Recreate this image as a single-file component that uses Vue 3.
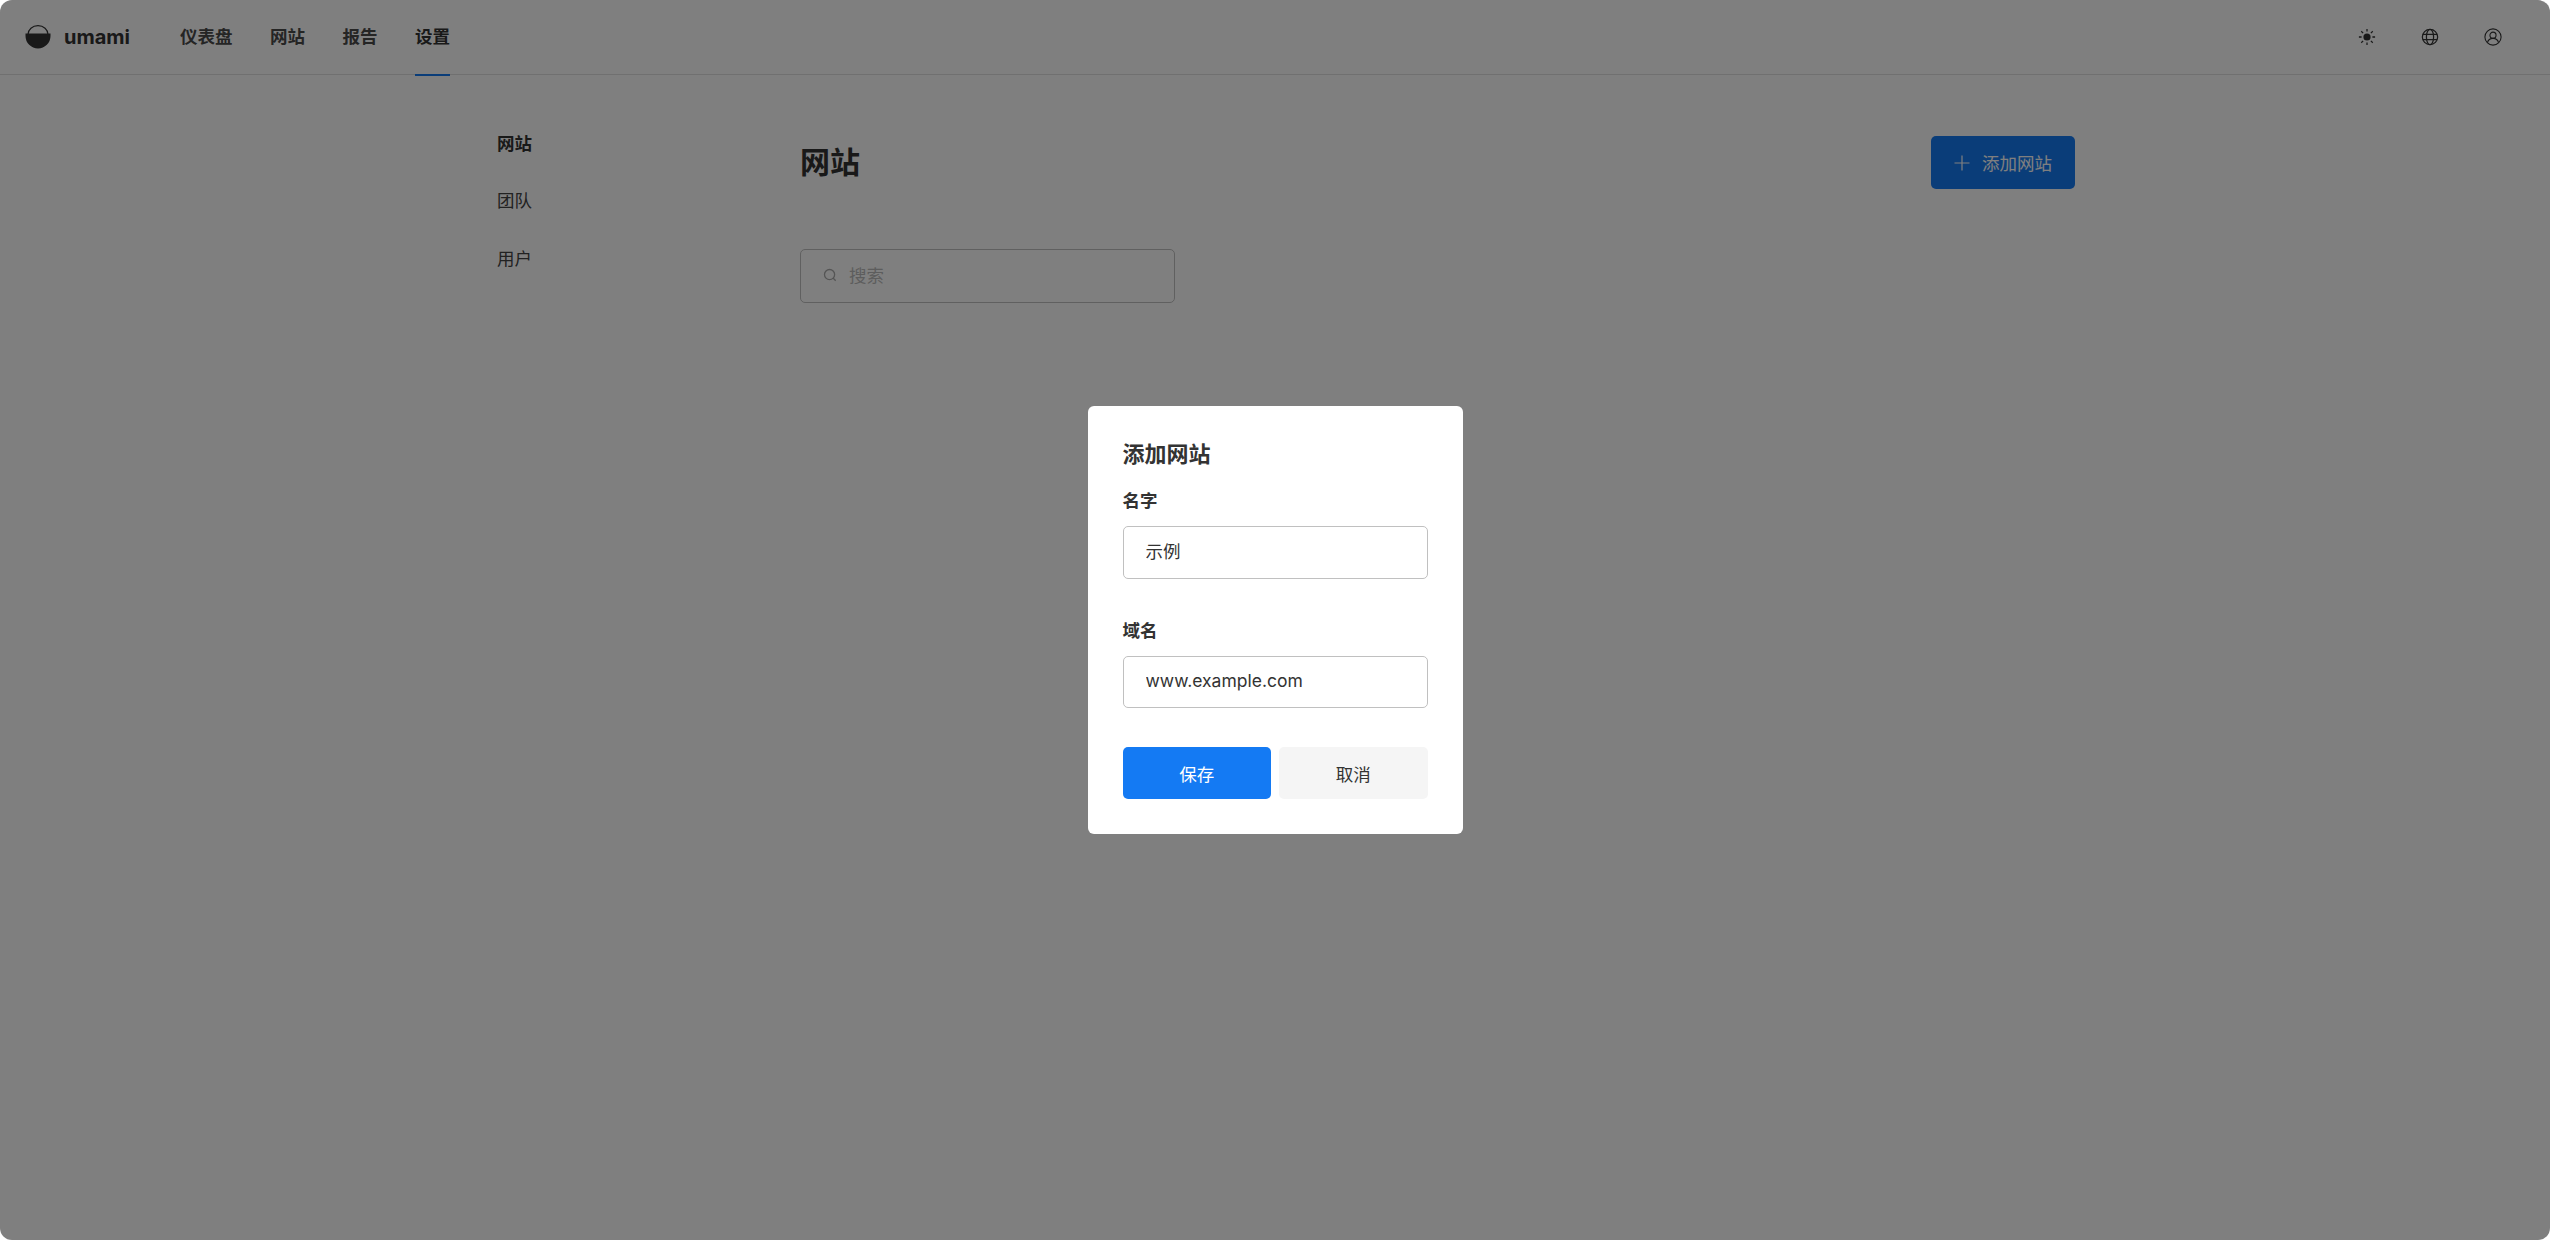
<template>
  <div class="page">
    <header class="header">
      <div class="brand">
        <svg class="logo" viewBox="0 0 26 24" width="26" height="24">
          <path d="M3 9.5a10 8.8 0 0 1 20 0" fill="none" stroke="#333" stroke-width="1.200" />
          <path d="M.5 8.500h25v2.500a12.500 12.500 0 0 1-25 0z" fill="#333" />
        </svg>
        <span class="brand-name">umami</span>
      </div>
      <nav class="nav">
        <a v-for="item in navItems" :key="item" class="nav-item" :class="{ active: item === '设置' }">{{ item }}</a>
      </nav>
      <div class="actions">
        <button class="icon-btn">
          <svg viewBox="0 0 20 20" width="18" height="18">
            <circle cx="10" cy="10" r="4" fill="#333" />
            <path d="M10 1v3M10 16v3M1 10h3M16 10h3M3.600 3.600l2.100 2.100M14.300 14.300l2.100 2.100M3.600 16.400l2.100-2.100M14.300 5.700l2.100-2.100" stroke="#333" stroke-width="1.400" fill="none" />
          </svg>
        </button>
        <button class="icon-btn">
          <svg viewBox="0 0 20 20" width="18" height="18" fill="none" stroke="#333" stroke-width="1.400">
            <circle cx="10" cy="10" r="8.500" />
            <ellipse cx="10" cy="10" rx="4" ry="8.500" />
            <path d="M2.200 7h15.600M2.200 13h15.600" />
          </svg>
        </button>
        <button class="icon-btn">
          <svg viewBox="0 0 20 20" width="18" height="18" fill="none" stroke="#333" stroke-width="1.200">
            <circle cx="10" cy="10" r="9" />
            <circle cx="10" cy="8" r="3.400" />
            <path d="M3.800 16.200c.8-3 3.300-4.700 6.200-4.700s5.400 1.700 6.200 4.700" />
          </svg>
        </button>
      </div>
    </header>

    <main class="layout">
      <aside class="sidebar">
        <a v-for="item in sideItems" :key="item" class="side-item" :class="{ active: item === '网站' }">{{ item }}</a>
      </aside>
      <section class="content">
        <div class="page-head">
          <h1>网站</h1>
          <button class="add-btn">
            <svg viewBox="0 0 16 16" width="16" height="16">
              <path d="M8 .5v15M.5 8h15" stroke="#fff" stroke-width="1.200" fill="none" />
            </svg>
            <span>添加网站</span>
          </button>
        </div>
        <label class="search">
          <svg viewBox="0 0 16 16" width="14" height="14" fill="none" stroke="#aaa" stroke-width="1.500">
            <circle cx="7.500" cy="7.500" r="5.800" />
            <path d="M11.500 11.500l3 3" />
          </svg>
          <input type="text" placeholder="搜索" />
        </label>
      </section>
    </main>

    <div class="overlay">
      <form class="modal" @submit.prevent>
        <h2>添加网站</h2>
        <label class="field-label">名字</label>
        <input v-model="name" class="field-input cjk" type="text" />
        <label class="field-label second">域名</label>
        <input v-model="domain" class="field-input" type="text" />
        <div class="modal-btns">
          <button class="btn primary" type="submit">保存</button>
          <button class="btn" type="button">取消</button>
        </div>
      </form>
    </div>
  </div>
</template>

<script setup>
import { ref } from 'vue';

const navItems = ['仪表盘', '网站', '报告', '设置'];
const sideItems = ['网站', '团队', '用户'];

const name = ref('示例');
const domain = ref('www.example.com');
</script>

<style>
html,
body {
  margin: 0;
  background: #fff;
}
</style>

<style scoped>
.page {
  position: relative;
  height: 1240px;
  overflow: hidden;
  border-radius: 12px;
  background: #fff;
  color: #333;
  font-family: Inter, 'Noto Sans CJK SC', sans-serif;
  font-size: 17.5px;
}

.header {
  display: flex;
  align-items: center;
  height: 74px;
  padding: 0 0 0 25px;
  border-bottom: 1px solid #e1e1e1;
}

.brand {
  display: flex;
  align-items: center;
  gap: 13px;
  width: 155px;
}

.logo {
  display: block;
}

.brand-name {
  font-size: 20px;
  font-weight: 700;
  color: #333;
}

.nav {
  display: flex;
  gap: 37.500px;
  align-self: stretch;
}

.nav-item {
  display: flex;
  align-items: center;
  box-sizing: border-box;
  height: 76px;
  padding-bottom: 3px;
  font-weight: 600;
  border-bottom: 2px solid transparent;
  color: #4a4a4a;
}

.nav-item.active {
  color: #333;
  border-bottom-color: #147af3;
}

.actions {
  display: flex;
  gap: 45px;
  margin-left: auto;
  padding-right: 48px;
}

.icon-btn {
  display: flex;
  padding: 0;
  border: 0;
  background: none;
}

.layout {
  display: grid;
  grid-template-columns: 323px 1fr;
  box-sizing: border-box;
  width: 1600px;
  margin: 0 auto;
  padding-left: 2px;
}

.sidebar {
  display: flex;
  flex-direction: column;
  gap: 31.500px;
  padding: 55.500px 0 0 20px;
}

.side-item {
  line-height: 26px;
  color: #444;
}

.side-item.active {
  font-weight: 700;
  color: #333;
}

.page-head {
  display: flex;
  align-items: center;
  justify-content: space-between;
  margin-top: 61px;
}

h1 {
  margin: 0;
  padding-bottom: 6px;
  font-size: 30px;
  font-weight: 700;
  color: #333;
}

.add-btn {
  display: flex;
  align-items: center;
  justify-content: center;
  gap: 12px;
  width: 144px;
  height: 53px;
  padding: 0;
  border: 0;
  border-radius: 5px;
  background: #147af3;
  color: #fff;
  font: inherit;
}

.search {
  display: flex;
  align-items: center;
  gap: 12px;
  box-sizing: border-box;
  width: 375px;
  height: 54px;
  margin-top: 60px;
  padding: 0 22px 2px;
  border: 1px solid #c0c0c0;
  border-radius: 5px;
}

.search input {
  flex: 1;
  min-width: 0;
  padding: 0;
  border: 0;
  outline: none;
  font: inherit;
  color: #333;
}

.search input::placeholder {
  color: #bbb;
}

.overlay {
  position: absolute;
  inset: 0;
  display: flex;
  align-items: center;
  justify-content: center;
  background: rgba(0, 0, 0, 0.5);
}

.modal {
  display: flex;
  flex-direction: column;
  box-sizing: border-box;
  width: 375px;
  padding: 35px;
  border-radius: 6px;
  background: #fff;
}

h2 {
  margin: 0 0 21px;
  font-size: 22px;
  line-height: 26px;
  font-weight: 700;
  color: #333;
}

.field-label {
  margin-bottom: 12px;
  line-height: 26px;
  font-weight: 700;
}

.field-label.second {
  margin-top: 39px;
}

.field-input {
  box-sizing: border-box;
  width: 100%;
  height: 52.500px;
  padding: 0 22px 2px;
  border: 1px solid #c0c0c0;
  border-radius: 5px;
  outline: none;
  font: inherit;
  color: #333;
}

.field-input.cjk {
  padding-bottom: 4px;
}

.modal-btns {
  display: grid;
  grid-template-columns: 1fr 1fr;
  gap: 8px;
  margin-top: 39px;
}

.btn {
  height: 52px;
  padding: 0;
  border: 0;
  border-radius: 5px;
  background: #f5f5f5;
  color: #333;
  font: inherit;
}

.btn.primary {
  background: #147af3;
  color: #fff;
}
</style>
